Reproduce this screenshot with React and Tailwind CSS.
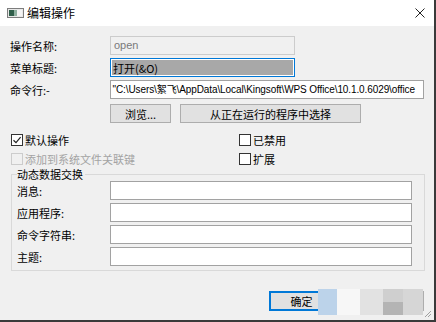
import React from 'react'

const cjk = { fontFamily: '"Noto Sans CJK SC", "Noto Sans", sans-serif' }

function Check({ checked, disabled, label }) {
  return (
    <div className="flex items-center h-[19px] gap-[2px]">
      <span
        className={
          'flex items-center justify-center w-[12px] h-[12px] border ' +
          (disabled ? 'border-[#cccccc] bg-[#f0f0f0]' : 'border-[#333333] bg-white')
        }
      >
        {checked && (
          <svg width="10" height="10" viewBox="0 0 10 10">
            <path d="M1.5 5.2 L4 7.6 L8.6 2.2" fill="none" stroke="#222" strokeWidth="1.2" />
          </svg>
        )}
      </span>
      <span className={'text-[11px] leading-[14px] ' + (disabled ? 'text-[#a3a3a3]' : 'text-black')}>{label}</span>
    </div>
  )
}

function Field({ className = '', children }) {
  return (
    <div
      className={
        'h-[19px] border border-[#a2a2a2] bg-white flex items-center px-[2px] overflow-hidden whitespace-nowrap ' +
        className
      }
    >
      {children}
    </div>
  )
}

export default function App() {
  return (
    <div
      className="relative w-[436px] h-[322px] bg-[#f0f0f0] border-r-2 border-b-2 border-[#3a3a3a] overflow-hidden text-black"
      style={cjk}
    >
      {/* title bar */}
      <div className="h-[26px] bg-white flex items-center pl-[7px] pr-[9px]">
        <svg width="17" height="10" viewBox="0 0 17 10" className="mr-[3px]">
          <rect x="0.5" y="0.5" width="16" height="9" fill="#e8e8e8" stroke="#7d7d7d" />
          <rect x="2" y="2" width="5" height="6" fill="#2f5f4a" />
          <rect x="7" y="2" width="3" height="6" fill="#8fb0a0" />
          <rect x="10" y="2" width="5" height="6" fill="#f4f4f4" />
        </svg>
        <span className="text-[12px] leading-[16px]">编辑操作</span>
        <div className="flex-1" />
        <svg width="10" height="10" viewBox="0 0 10 10">
          <path d="M0.5 0.5 L9.5 9.5 M9.5 0.5 L0.5 9.5" stroke="#222" strokeWidth="1" />
        </svg>
      </div>

      <div className="px-[10px] pt-[10px]">
        {/* top rows */}
        <div className="flex items-center">
          <span className="w-[100px] text-[11px] leading-[14px]">操作名称:</span>
          <div className="w-[185px] h-[19px] border border-[#cccccc] bg-[#f0f0f0] flex items-center px-[3px] text-[11px] text-[#7a7a7a]" style={{ fontFamily: '"Liberation Sans", sans-serif' }}>
            open
          </div>
        </div>
        <div className="flex items-center mt-[3px]">
          <span className="w-[100px] text-[11px] leading-[14px]">菜单标题:</span>
          <div className="w-[185px] h-[19px] border border-[#0078d7] bg-white p-[1px]">
            <div className="h-full bg-[#a8a8a8] flex items-center px-[1px] text-[11px] leading-[14px]">打开(&amp;O)</div>
          </div>
        </div>
        <div className="flex items-center mt-[3px]">
          <span className="w-[100px] text-[11px] leading-[14px]">命令行:-</span>
          <Field className="w-[316px] text-[10px] leading-[14px]">
            <span className="tracking-[-0.1px]" style={{ fontFamily: '"Liberation Sans", "Noto Sans CJK SC", sans-serif' }}>
              "C:\Users\絮飞\AppData\Local\Kingsoft\WPS Office\10.1.0.6029\office
            </span>
          </Field>
        </div>
        <div className="flex items-center mt-[5px] pl-[100px] gap-[9px]">
          <button className="w-[61px] h-[19px] bg-[#e1e1e1] border border-[#adadad] text-[11px] leading-[14px]">浏览...</button>
          <button className="w-[181px] h-[19px] bg-[#e1e1e1] border border-[#adadad] text-[11px] leading-[14px]">从正在运行的程序中选择</button>
        </div>

        {/* checkboxes */}
        <div className="grid grid-cols-[228px_1fr] mt-[7px] pl-[1px]">
          <Check checked label="默认操作" />
          <Check label="已禁用" />
          <Check disabled label="添加到系统文件关联键" />
          <Check label="扩展" />
        </div>

        {/* DDE group */}
        <fieldset className="ml-[1px] mt-[-1px] w-[414px] border border-[#d9d9d9] pl-[5px] pr-[12px] pb-[4px]">
          <legend className="text-[11px] leading-[14px] pr-[2px]">动态数据交换</legend>
          {['消息:', '应用程序:', '命令字符串:', '主题:'].map((label, i) => (
            <div key={label} className={'flex items-center ' + (i ? 'mt-[3px]' : '')}>
              <span className="w-[93px] text-[11px] leading-[14px]">{label}</span>
              <Field className="flex-1" />
            </div>
          ))}
        </fieldset>

        {/* dialog buttons */}
        <div className="flex justify-end mt-[20px] gap-[24px]">
          <button className="w-[65px] h-[20px] bg-[#e1e1e1] border-2 border-[#0078d7] text-[11px] leading-[14px]">确定</button>
          <button className="w-[66px] h-[20px] bg-[#e1e1e1] border border-[#adadad] text-[11px] leading-[14px] text-[#e1e1e1]">取消</button>
        </div>
      </div>

      {/* mosaic watermark */}
      <div className="absolute left-[318px] top-[289px] flex h-[26px]">
        <div className="w-[19px] h-full bg-[#bcd3ea]" />
        <div className="w-[23px] h-full bg-[#f7f7f7]" />
        <div className="w-[23px] h-full bg-[#e2e2e2]" />
        <div className="w-[20px] h-full flex flex-col">
          <div className="h-1/2 bg-[#cfcfcf]" />
          <div className="h-1/2 bg-[#b4b4b4]" />
        </div>
        <div className="w-[20px] h-full bg-[#d6d6d6]" />
      </div>

      {/* resize grip */}
      <svg width="8" height="8" viewBox="0 0 8 8" className="absolute right-[2px] bottom-[2px]">
        <path d="M7 1 L1 7 M7 4 L4 7" stroke="#a0a0a0" strokeWidth="1" />
      </svg>
    </div>
  )
}
